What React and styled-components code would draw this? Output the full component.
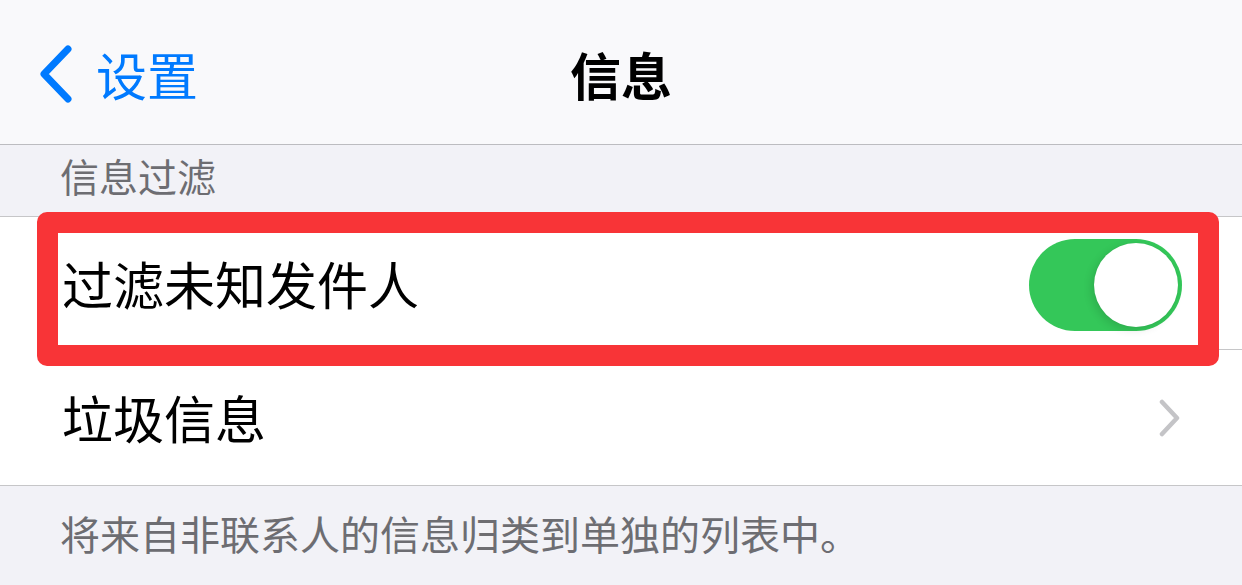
import React from 'react';
import styled, { createGlobalStyle } from 'styled-components';

const GlobalStyle = createGlobalStyle`
  html, body {
    margin: 0;
    padding: 0;
    background: #f2f2f7;
    font-family: "Noto Sans CJK SC", "Noto Sans", sans-serif;
    -webkit-font-smoothing: antialiased;
  }
`;

const Screen = styled.div`
  width: 1242px;
  height: 585px;
  overflow: hidden;
  background: #f2f2f7;
  display: flex;
  flex-direction: column;
`;

const NavBar = styled.div`
  height: 145px;
  flex-shrink: 0;
  background: #f9f9fb;
  border-bottom: 1px solid #bcbcc0;
  display: grid;
  grid-template-columns: 1fr auto 1fr;
  align-items: center;
  padding-top: 4px;
  box-sizing: border-box;
`;

const BackButton = styled.div`
  display: flex;
  align-items: center;
  gap: 22px;
  padding-left: 38px;
  color: #007aff;
  font-size: 51px;
  line-height: 1;
`;

const NavTitle = styled.div`
  font-size: 51px;
  font-weight: 600;
  color: #000;
  line-height: 1;
`;

const SectionHeader = styled.div`
  height: 72px;
  flex-shrink: 0;
  padding-left: 60px;
  font-size: 39px;
  color: #6d6d72;
  line-height: 1;
  padding-top: 11px;
  box-sizing: border-box;
  border-bottom: 1px solid #c6c6c8;
`;

const List = styled.div`
  background: #fff;
  border-bottom: 1px solid #c6c6c8;
`;

const Row = styled.div`
  position: relative;
  height: ${({ $h }) => $h}px;
  display: flex;
  align-items: center;
  justify-content: space-between;
  padding: 0 60px 0 62px;
  box-sizing: border-box;
  font-size: 51px;
  color: #000;
  line-height: 1;
  &::after {
    content: '';
    display: ${({ $divider }) => ($divider ? 'block' : 'none')};
    position: absolute;
    left: 62px;
    right: 0;
    bottom: 0;
    height: 1px;
    background: #c6c6c8;
  }
`;

const Highlight = styled.div`
  position: absolute;
  top: -5px;
  left: 37px;
  right: 23px;
  bottom: -16px;
  border: 21px solid #f83437;
  border-radius: 10px;
  pointer-events: none;
  z-index: 2;
`;

const Toggle = styled.div`
  width: 153px;
  height: 92px;
  border-radius: 46px;
  background: #34c759;
  position: relative;
  flex-shrink: 0;
  margin-top: 2px;
`;

const Knob = styled.div`
  position: absolute;
  top: 4px;
  right: 4px;
  width: 84px;
  height: 84px;
  border-radius: 50%;
  background: #fff;
  box-shadow: -3px 3px 8px rgba(0, 0, 0, 0.12), 0 0 1px rgba(0, 0, 0, 0.1);
`;

const Footer = styled.div`
  padding: 27px 0 0 60px;
  font-size: 40px;
  color: #6d6d72;
  line-height: 1;
`;

function BackChevron() {
  return (
    <svg width="36" height="58" viewBox="0 0 36 58">
      <path
        d="M30 4 L6 29 L30 54"
        fill="none"
        stroke="#007aff"
        strokeWidth="7"
        strokeLinecap="round"
        strokeLinejoin="round"
      />
    </svg>
  );
}

function Chevron() {
  return (
    <svg width="24" height="38" viewBox="0 0 24 38">
      <path
        d="M4 3 L19 19 L4 35"
        fill="none"
        stroke="#c4c4c7"
        strokeWidth="4.5"
        strokeLinecap="round"
        strokeLinejoin="round"
      />
    </svg>
  );
}

export default function App() {
  return (
    <>
      <GlobalStyle />
      <Screen>
        <NavBar>
          <BackButton>
            <BackChevron />
            <span>设置</span>
          </BackButton>
          <NavTitle>信息</NavTitle>
          <div />
        </NavBar>
        <SectionHeader>信息过滤</SectionHeader>
        <List>
          <Row $h={133} $divider>
            <span>过滤未知发件人</span>
            <Toggle>
              <Knob />
            </Toggle>
            <Highlight />
          </Row>
          <Row $h={135}>
            <span>垃圾信息</span>
            <Chevron />
          </Row>
        </List>
        <Footer>将来自非联系人的信息归类到单独的列表中。</Footer>
      </Screen>
    </>
  );
}
